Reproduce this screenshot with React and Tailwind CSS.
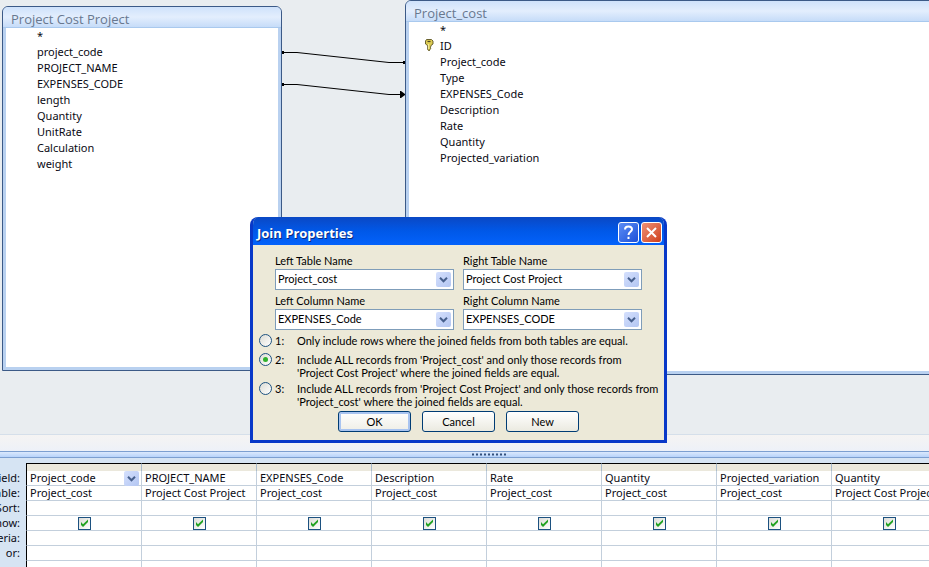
import { useState } from "react";

const projectFields = [
  "*",
  "project_code",
  "PROJECT_NAME",
  "EXPENSES_CODE",
  "length",
  "Quantity",
  "UnitRate",
  "Calculation",
  "weight",
];

const costFields = [
  "*",
  "ID",
  "Project_code",
  "Type",
  "EXPENSES_Code",
  "Description",
  "Rate",
  "Quantity",
  "Projected_variation",
];

const gridColumns = [
  { field: "Project_code", table: "Project_cost", active: true },
  { field: "PROJECT_NAME", table: "Project Cost Project" },
  { field: "EXPENSES_Code", table: "Project_cost" },
  { field: "Description", table: "Project_cost" },
  { field: "Rate", table: "Project_cost" },
  { field: "Quantity", table: "Project_cost" },
  { field: "Projected_variation", table: "Project_cost" },
  { field: "Quantity", table: "Project Cost Project" },
];

const joinOptions = [
  {
    id: "1",
    lines: ["Only include rows where the joined fields from both tables are equal."],
    height: "h-[19px]",
  },
  {
    id: "2",
    lines: [
      "Include ALL records from 'Project_cost' and only those records from",
      "'Project Cost Project' where the joined fields are equal.",
    ],
    height: "h-[29px]",
  },
  {
    id: "3",
    lines: [
      "Include ALL records from 'Project Cost Project' and only those records from",
      "'Project_cost' where the joined fields are equal.",
    ],
    height: "h-[29px]",
  },
];

function KeyIcon() {
  return (
    <svg className="absolute left-[15px] top-px" width="10" height="12" viewBox="0 0 10 12">
      <path
        d="M2.500 .5h5l1.500 1.500v3l-2 1.500v1l-1 .8 1 .9-1 1v.8l-1 .7-1.300-1V6.600L1.500 5V2z"
        fill="#dccb52"
        stroke="#5b5323"
        strokeWidth="0.900"
      />
      <path d="M3.500 2.500h3" stroke="#4a4322" strokeWidth="1.200" />
      <path d="M4.600 5v5" stroke="#fbf3a8" strokeWidth="0.900" />
    </svg>
  );
}

function DropArrow({ className }) {
  return (
    <span
      className={`pointer-events-none flex size-[15px] items-center justify-center rounded-xs bg-linear-to-br from-[#d5e0fd] to-[#b3c6f2] ${className}`}
    >
      <svg width="9" height="6" viewBox="0 0 9 6">
        <path d="M1 .8l3.500 3.500L8 .8" fill="none" stroke="#465f8c" strokeWidth="2" />
      </svg>
    </span>
  );
}

// Field list window of the relationship canvas
function TableWindow({ title, fields, className }) {
  return (
    <section
      className={`absolute flex flex-col rounded-t-md border border-[#3c5a87] bg-[#b9d1f0] ${className}`}
    >
      <h2 className="h-[21px] shrink-0 rounded-t-[5px] border-b border-[#a9c9ee] bg-linear-to-b from-[#cfe2fb] via-[#e3eefd] to-[#c6dcf8] pl-2 font-['Open_Sans',sans-serif] text-[13px] leading-6 text-[#68788f]">
        {title}
      </h2>
      <ul className="mx-[3px] mb-[3px] flex-1 bg-white text-[11px] leading-4 text-[#0a0a14]">
        {fields.map((field) => (
          <li key={field} className="relative pl-[31px]">
            {field === "ID" && <KeyIcon />}
            {field}
          </li>
        ))}
      </ul>
    </section>
  );
}

function JoinLines() {
  return (
    <svg className="absolute left-[282px] top-[45px]" width="123" height="60" viewBox="0 0 123 60">
      <g fill="none" stroke="#000">
        <path d="M0 7.500h15L107 17.500h16" />
        <path d="M0 39.500h15L107 49.500h16" />
      </g>
      <path d="M0 6h2v3H0zM121 16h2v3h-2zM0 38h2v3H0zM118 46h1l4 3v1l-4 3h-1z" />
    </svg>
  );
}

function SelectBox({ id, label, value }) {
  return (
    <div>
      <label htmlFor={id} className="block h-[19px] leading-[21px]">
        {label}
      </label>
      <div className="relative">
        <select
          id={id}
          className="block h-[21px] w-full appearance-none border border-[#7f9db9] bg-white pl-0.5 text-black outline-none"
          defaultValue={value}
        >
          <option>{value}</option>
        </select>
        <DropArrow className="absolute right-[3px] top-[3px]" />
      </div>
    </div>
  );
}

function JoinDialog() {
  const [joinType, setJoinType] = useState("2");

  return (
    <div
      role="dialog"
      aria-labelledby="join-title"
      className="absolute left-[250px] top-[217px] w-[417px] overflow-hidden rounded-t-lg border-x-3 border-b-3 border-[#0838c8] bg-[#ece9d8] font-[Lato,sans-serif] text-[11px] text-black"
    >
      <header className="-mx-[3px] flex h-7 items-center gap-0.5 bg-linear-to-b from-[#0a48c4] via-[#0058e8] to-[#0362fb] pl-[7px] pr-[5px]">
        <h1
          id="join-title"
          className="flex-1 pt-1 font-['Open_Sans',sans-serif] text-[13px] leading-5 font-bold text-white text-shadow-[1px_1px_0_#0a2a80]"
        >
          Join Properties
        </h1>
        <button
          type="button"
          aria-label="Help"
          className="mt-0.5 flex size-[21px] items-center justify-center rounded-[3px] border border-white bg-linear-to-br from-[#5c8cf5] to-[#1c4fd8]"
        >
          <svg width="13" height="15" viewBox="0 0 13 15" fill="none" stroke="#fff" strokeWidth="2">
            <path d="M3 4.500C3 2.500 4.300 1.500 6.400 1.500S10 2.600 10 4.300c0 2.500-3.500 2.500-3.500 5.700M6.500 11.700v2.300" />
          </svg>
        </button>
        <button
          type="button"
          aria-label="Close"
          className="mt-0.5 flex size-[21px] items-center justify-center rounded-[3px] border border-white bg-linear-to-br from-[#ee8f74] to-[#cf3c14]"
        >
          <svg width="13" height="13" viewBox="0 0 13 13" stroke="#fff" strokeWidth="2">
            <path d="M2 2l9 9M11 2l-9 9" />
          </svg>
        </button>
      </header>

      <form className="pt-[5px] pb-2" onSubmit={(e) => e.preventDefault()}>
        <div className="ml-[22px] grid grid-cols-[179px_179px] gap-x-[9px]">
          <SelectBox id="left-table" label="Left Table Name" value="Project_cost" />
          <SelectBox id="right-table" label="Right Table Name" value="Project Cost Project" />
          <SelectBox id="left-column" label="Left Column Name" value="EXPENSES_Code" />
          <SelectBox id="right-column" label="Right Column Name" value="EXPENSES_CODE" />
        </div>

        <div className="mt-1 ml-1.5">
          {joinOptions.map((option) => (
            <label
              key={option.id}
              className={`flex items-start leading-[13px] whitespace-nowrap ${option.height}`}
            >
              <input
                type="radio"
                name="join-type"
                value={option.id}
                checked={joinType === option.id}
                onChange={() => setJoinType(option.id)}
                className="grid size-[13px] shrink-0 appearance-none place-items-center rounded-full border border-[#1d5281] bg-linear-to-br from-[#dcdcd4] to-white before:size-[5px] before:rounded-full checked:before:bg-[#2fb12b]"
              />
              <span className="w-[25px] shrink-0 pl-[3px]">{option.id}:</span>
              <span>
                {option.lines.map((line) => (
                  <span key={line} className="block">
                    {line}
                  </span>
                ))}
              </span>
            </label>
          ))}
        </div>

        <div className="ml-[85px] flex gap-[11px]">
          <button
            type="submit"
            className="h-[21px] w-[73px] rounded-[3px] border border-[#003c74] bg-linear-to-b from-white to-[#efeee6] pt-0.5 shadow-[inset_0_0_0_2px_#a9c4f0]"
          >
            OK
          </button>
          <button
            type="button"
            className="h-[21px] w-[73px] rounded-[3px] border border-[#003c74] bg-linear-to-b from-white to-[#ebeae0] pt-0.5"
          >
            Cancel
          </button>
          <button
            type="button"
            className="h-[21px] w-[73px] rounded-[3px] border border-[#003c74] bg-linear-to-b from-white to-[#ebeae0] pt-0.5"
          >
            New
          </button>
        </div>
      </form>
    </div>
  );
}

function ShowCheckbox({ label }) {
  const [checked, setChecked] = useState(true);

  return (
    <span className="relative mx-auto block size-[13px]">
      <input
        type="checkbox"
        aria-label={label}
        checked={checked}
        onChange={() => setChecked(!checked)}
        className="block size-[13px] appearance-none border border-[#1c5180] bg-linear-to-br from-[#dcdcd7] to-white"
      />
      {checked && (
        <svg className="pointer-events-none absolute inset-0" width="13" height="13" viewBox="0 0 13 13">
          <path d="M3 5v3l2 2 5-5V2.500L5 7.300z" fill="#21a121" />
        </svg>
      )}
    </span>
  );
}

function DesignGrid() {
  const cell = "h-[15px] border-r border-b border-[#c3cfdc] p-0";
  const labelCell = "h-[15px] p-0 pr-1.5 text-right font-normal";

  const renderRow = (label, renderCell) => (
    <tr>
      <th scope="row" className={labelCell}>
        <div className="flex h-[15px] justify-end">{label}</div>
      </th>
      {gridColumns.map((column, i) => (
        <td key={i} className={cell}>
          {renderCell && renderCell(column)}
        </td>
      ))}
    </tr>
  );

  return (
    <div className="h-[109px] shrink-0 overflow-hidden bg-[#d6e4f3] pt-[5px]">
      <table className="w-[947px] table-fixed border-separate border-spacing-0 text-[11px] leading-[13px] whitespace-nowrap text-[#0a0a14]">
        <colgroup>
          <col className="w-[26px]" />
          <col className="w-[116px]" />
        </colgroup>
        <tbody className="[&_td]:bg-white [&_td:nth-child(2)]:border-l [&_td:nth-child(2)]:border-l-black">
          <tr>
            <td className="h-2 bg-transparent! p-0" />
            {gridColumns.map((_, i) => (
              <td
                key={i}
                className="h-2 border-t border-r border-t-black border-r-[#a9bccd] bg-[#ebe8dc]! p-0"
              />
            ))}
          </tr>
          {renderRow("Field:", (column) => (
            <div className="flex h-3.5 justify-between pl-[3px]">
              {column.field}
              {column.active && <DropArrow className="mr-0.5" />}
            </div>
          ))}
          {renderRow("Table:", (column) => (
            <div className="h-3.5 pl-[3px]">{column.table}</div>
          ))}
          {renderRow("Sort:")}
          {renderRow("Show:", (column) => (
            <ShowCheckbox label={`Show ${column.field}`} />
          ))}
          {renderRow("Criteria:")}
          {renderRow("or:")}
          {renderRow("")}
        </tbody>
      </table>
    </div>
  );
}

function App() {
  return (
    <div className="relative flex h-screen flex-col overflow-hidden bg-[#e9edf0] font-['Noto_Sans',sans-serif]">
      <main className="relative flex-1">
        <TableWindow
          title="Project Cost Project"
          fields={projectFields}
          className="left-0.5 top-1.5 h-[365px] w-[280px]"
        />
        <JoinLines />
        <TableWindow
          title="Project_cost"
          fields={costFields}
          className="-right-5 left-[405px] top-0 h-[375px]"
        />
      </main>

      <div className="h-[17px] shrink-0 border-t border-[#d5dfea] bg-linear-to-b from-[#f5f4f3] to-[#edf1f8]" />
      <div className="flex h-[7px] shrink-0 items-center justify-center border-y border-[#7c9fd0] bg-linear-to-b from-[#dbe9fc] to-[#b7d3fa] pl-[50px]">
        <svg width="35" height="3" viewBox="0 0 35 3">
          <path d="M0 1.500h35" stroke="#33507c" strokeWidth="2" strokeDasharray="2 2" />
        </svg>
      </div>
      <DesignGrid />

      <JoinDialog />
    </div>
  );
}

export default App;
